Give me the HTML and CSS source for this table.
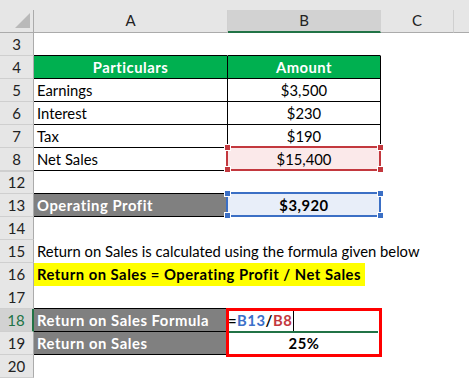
FILE: index.html
```html
<!DOCTYPE html>
<html>
<head>
<meta charset="utf-8">
<link rel="stylesheet" href="styles.css">
</head>
<body>
<div class="sheet">
  <div class="colhead">
    <div class="corner"><svg width="16" height="16" viewBox="0 0 16 16"><polygon points="15,0 15,15 0,15" fill="#b9b9b9"/></svg></div>
    <div class="ch">A</div>
    <div class="ch sel">B</div>
    <div class="ch">C</div>
    <div class="ch last"></div>
  </div>

  <div class="row">
    <div class="rh">3</div><div class="c a bb"></div><div class="c b bb"></div><div class="c"></div><div class="c"></div>
  </div>
  <div class="row">
    <div class="rh">4</div><div class="c a green box">Particulars</div><div class="c b green box">Amount</div><div class="c"></div><div class="c"></div>
  </div>
  <div class="row">
    <div class="rh">5</div><div class="c a box">Earnings</div><div class="c b box num">$3,500</div><div class="c"></div><div class="c"></div>
  </div>
  <div class="row">
    <div class="rh">6</div><div class="c a box">Interest</div><div class="c b box num">$230</div><div class="c"></div><div class="c"></div>
  </div>
  <div class="row">
    <div class="rh">7</div><div class="c a box">Tax</div><div class="c b box num">$190</div><div class="c"></div><div class="c"></div>
  </div>
  <div class="row">
    <div class="rh">8</div><div class="c a box">Net Sales</div>
    <div class="c b box num ref ref-red">$15,400
      <span class="frame"></span><span class="h tl"></span><span class="h tr"></span><span class="h bl"></span><span class="h br"></span>
    </div><div class="c"></div><div class="c"></div>
  </div>
  <div class="row">
    <div class="rh hidden-above">12</div><div class="c a bb"></div><div class="c b"></div><div class="c"></div><div class="c"></div>
  </div>
  <div class="row">
    <div class="rh">13</div><div class="c a gray box">Operating Profit</div>
    <div class="c b num bold ref ref-blue">$3,920
      <span class="frame"></span><span class="h tl"></span><span class="h tr"></span><span class="h bl"></span><span class="h br"></span>
    </div><div class="c"></div><div class="c"></div>
  </div>
  <div class="row">
    <div class="rh">14</div><div class="c a"></div><div class="c b"></div><div class="c"></div><div class="c"></div>
  </div>
  <div class="row">
    <div class="rh">15</div><div class="c a spill">Return on Sales is calculated using the formula given below</div><div class="c b"></div><div class="c"></div><div class="c"></div>
  </div>
  <div class="row">
    <div class="rh">16</div><div class="c a spill flush"><span class="hl">Return on Sales = Operating Profit / Net Sales</span></div><div class="c b"></div><div class="c"></div><div class="c"></div>
  </div>
  <div class="row">
    <div class="rh">17</div><div class="c a bb"></div><div class="c b"></div><div class="c"></div><div class="c"></div>
  </div>
  <div class="row">
    <div class="rh active">18</div><div class="c a gray box">Return on Sales Formula</div>
    <div class="c b bold formula">=<span class="blue">B13</span>/<span class="red">B8</span><span class="caret"></span>
      <span class="redbox"></span><span class="active-line"></span>
    </div><div class="c"></div><div class="c"></div>
  </div>
  <div class="row">
    <div class="rh">19</div><div class="c a gray box">Return on Sales</div><div class="c b num bold">25%</div><div class="c"></div><div class="c"></div>
  </div>
  <div class="row">
    <div class="rh">20</div><div class="c a"></div><div class="c b"></div><div class="c"></div><div class="c"></div>
  </div>
</div>
</body>
</html>
```

FILE: styles.css
```css
* { box-sizing: border-box; }
html, body { margin: 0; padding: 0; background: #fff; }
body { width: 469px; height: 378px; overflow: hidden; }

.sheet {
  font-family: "Lato", "Open Sans", sans-serif;
  font-size: 14.8px;
  color: #000;
  background: #fff;
}

.colhead {
  display: grid;
  grid-template-columns: 34px 194px 153px 73px 1fr;
  height: 33px;
  padding-top: 10px;
  background: #e6e6e6;
}
.corner {
  border-right: 1px solid #ababab;
  border-bottom: 1px solid #ababab;
  padding: 3px 0 0 15px;
  line-height: 0;
}
.ch {
  border-bottom: 1px solid #ababab;
  border-right: 1px solid #d0d0d0;
  text-align: center;
  line-height: 21px;
  color: #222;
  font-size: 15px;
}
.ch.sel {
  background: #d2d2d2;
  border-bottom: 2px solid #217346;
  border-right: 1px solid #d2d2d2;
}
.ch.last { border-right: none; }

.row {
  display: grid;
  grid-template-columns: 34px 194px 153px 73px 1fr;
  height: 23px;
}
.rh {
  background: #e6e6e6;
  border-right: 1px solid #ababab;
  border-bottom: 1px solid #cfcfcf;
  text-align: center;
  line-height: 22px;
  color: #222;
  font-size: 15px;
}
.rh.hidden-above { box-shadow: inset 0 1px 0 #cfcfcf; }
.rh.active {
  background: #d2d2d2;
  color: #217346;
  border-right: 2px solid #217346;
}

.c {
  position: relative;
  border-right: 1px solid transparent;
  border-bottom: 1px solid transparent;
  line-height: 22px;
  padding-left: 3px;
  white-space: nowrap;
}
.c.bb { border-bottom-color: #000; }
.c.box { border-right-color: #000; border-bottom-color: #000; }
.c.green { background: #00b050; background-clip: padding-box; color: #fff; font-weight: 700; letter-spacing: 0.5px; text-align: center; padding-left: 0; }
.c.gray { background: #808080; background-clip: padding-box; color: #fff; font-weight: 700; letter-spacing: 0.55px; }
.c.num { text-align: center; padding-left: 0; }
.c.bold { font-weight: 700; letter-spacing: 0.5px; }
.c.spill { overflow: visible; }
.c.flush { padding-left: 0; }

.hl {
  display: inline-block;
  height: 23px;
  line-height: 22px;
  background: #ffff00;
  font-weight: 700;
  letter-spacing: 0.5px;
  padding: 0 4px 0 3px;
}

/* reference highlight frames */
.ref-red { background: #fbe9ea; }
.ref-blue { background: #e8eef9; }
.frame {
  position: absolute;
  left: -2px; top: -2px; right: -1px; bottom: -1px;
  border: 2px solid;
}
.ref-red .frame { border-color: #c3383e; }
.ref-blue .frame { border-color: #3b6fc5; }
.h {
  position: absolute;
  width: 7px; height: 7px;
  border: 1px solid #fff;
}
.ref-red .h { background: #c3383e; }
.ref-blue .h { background: #3b6fc5; }
.h.tl { left: -4px; top: -4px; }
.h.tr { right: -4px; top: -4px; }
.h.bl { left: -4px; bottom: -3px; }
.h.br { right: -4px; bottom: -3px; }

.formula { padding-left: 0; }
.blue { color: #3b6fc9; }
.red { color: #c3383e; }
.caret {
  display: inline-block;
  width: 1px;
  height: 20px;
  background: #000;
  margin-left: 1px;
  vertical-align: -5px;
}
.redbox {
  position: absolute;
  left: -2px; top: -1px;
  width: 156px; height: 49px;
  border: 3px solid #ff0000;
  z-index: 2;
}
.active-line {
  position: absolute;
  left: 1px; right: 2px; bottom: -2px;
  height: 2px;
  background: #217346;
  z-index: 1;
}
```
